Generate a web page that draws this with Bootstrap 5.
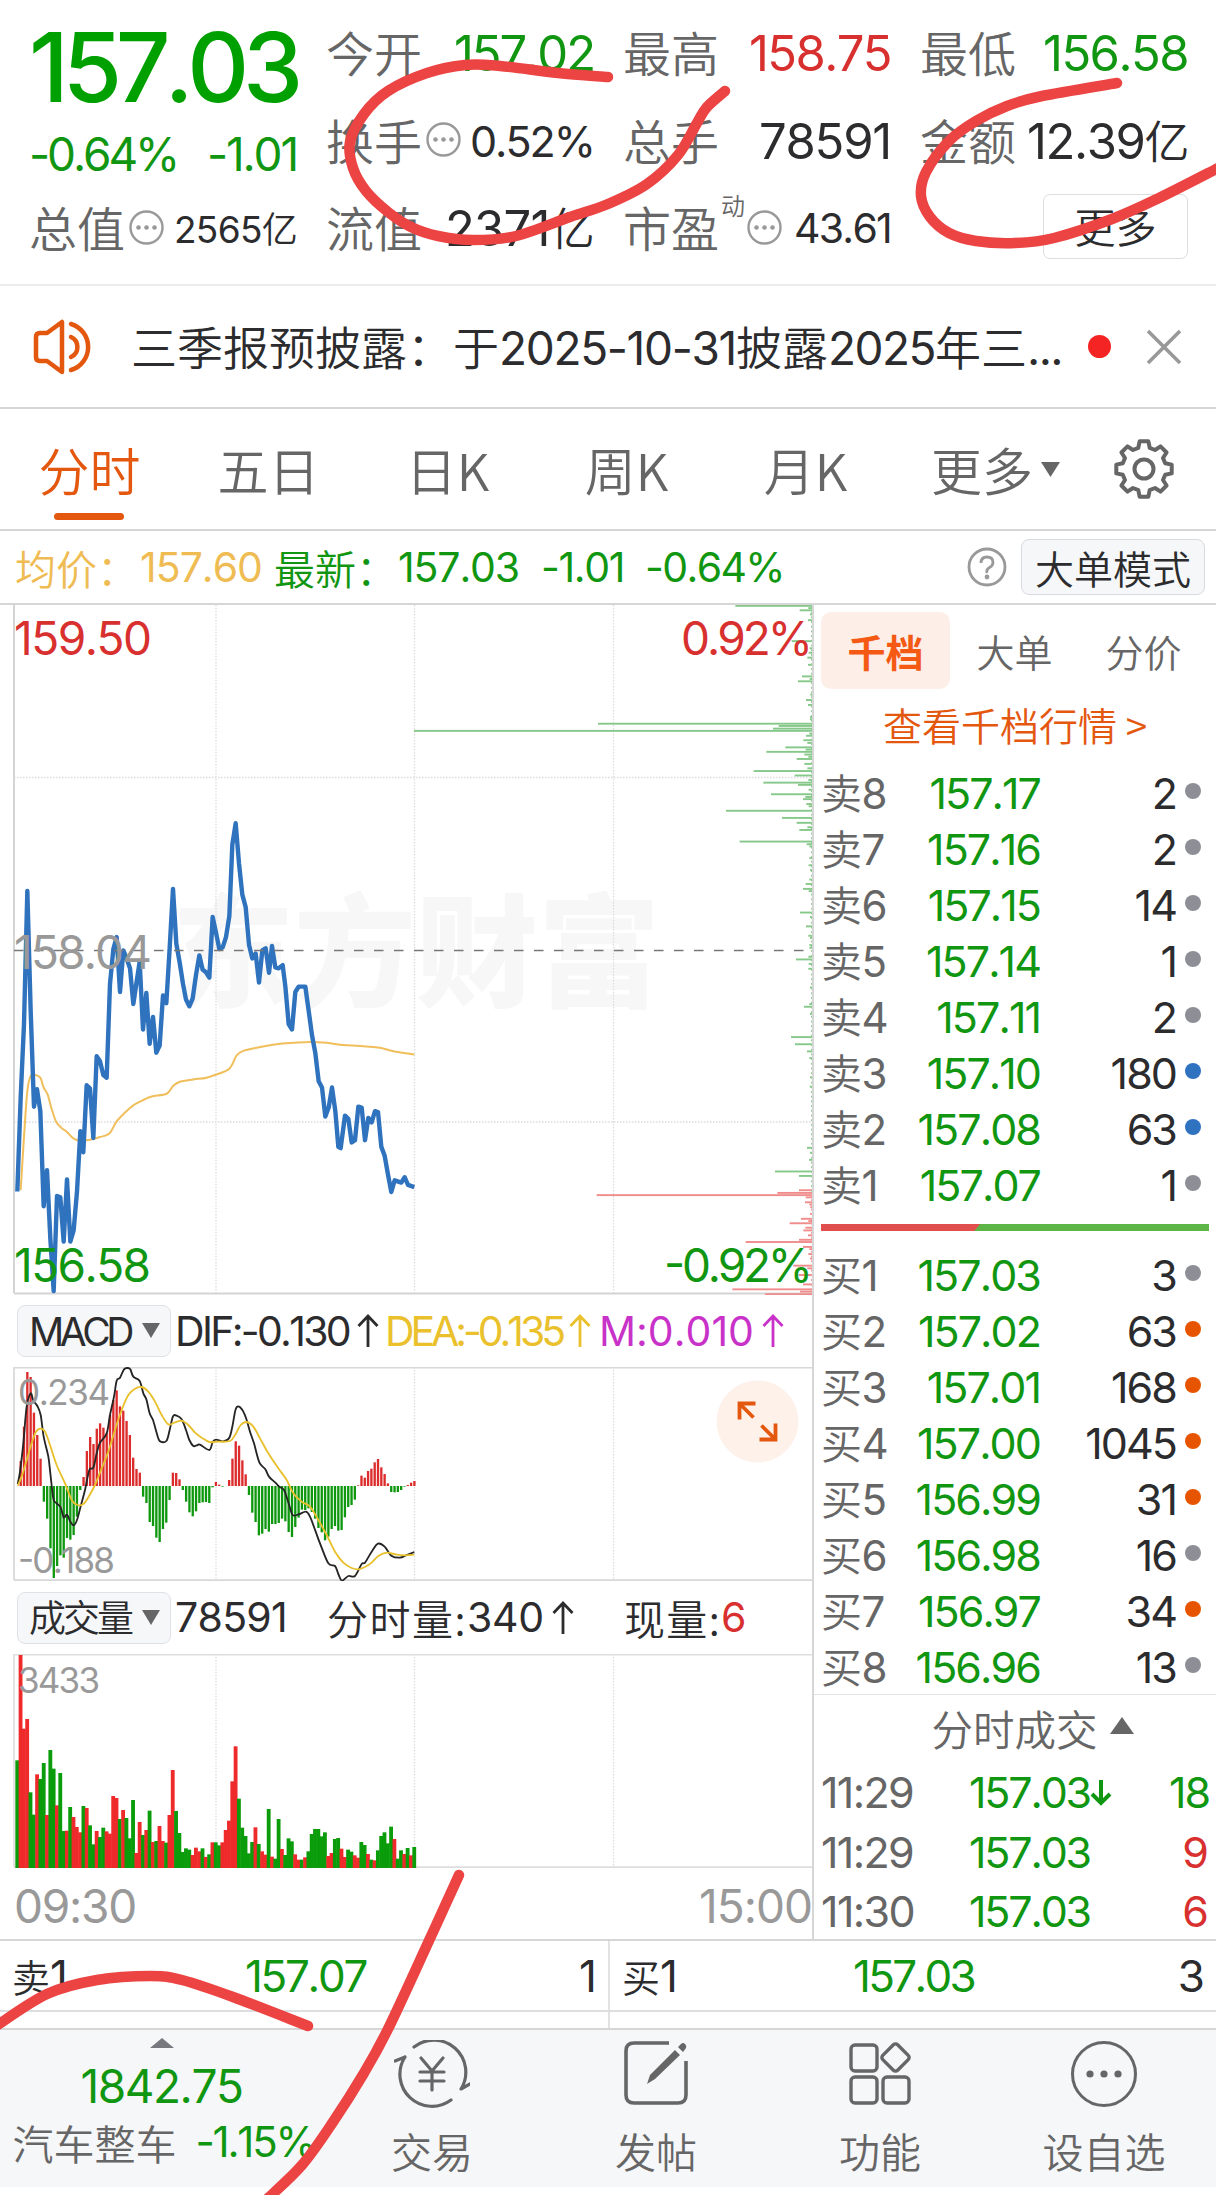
<!DOCTYPE html>
<html lang="zh-CN">
<head>
<meta charset="utf-8">
<meta name="viewport" content="width=device-width, initial-scale=1">
<title>分时行情</title>
<link rel="stylesheet" href="https://cdn.jsdelivr.net/npm/bootstrap@5.3.0/dist/css/bootstrap.min.css">
<style>
:root{--up:#d8302f;--down:#119611;--ink:#2c2c2e;--mute:#666;--soft:#999;--brand:#e4570f;--rule:#d6d6d6}
body{width:1216px;height:2195px;overflow:hidden;position:relative;background:#fff;color:var(--ink);font-family:Inter,"Noto Sans CJK SC",sans-serif;font-weight:400;line-height:1;font-kerning:none}
.t-up{color:var(--up)}.t-down{color:var(--down)}.t-mute{color:var(--mute)}.t-brand{color:var(--brand)}
.cjk{font-family:"Noto Sans CJK SC",sans-serif;font-weight:350}
body span{white-space:nowrap}
.summary{height:286px;border-bottom:2px solid #ededed;padding:0 28px 0 29px}
.summary-col{width:268px;padding-top:10px}
.summary-row{height:87.5px;font-size:49px}
.summary-row .cjk{font-size:48px}
.summary-row>.cjk.t-mute{margin-top:-5px}
.price-big{font-size:96px;font-weight:500;color:#00a000;height:106px;padding-top:9px}
.change{font-size:46px;height:69px;padding-top:7px}
.tip{width:35px;height:35px;flex:none}
.summary-row .tip{margin-top:-3px}
.summary-row>.dyn.cjk{font-size:24px;align-self:flex-start;margin:8px 0 0 2px}
.more-btn{width:145px;height:65px;border:1.5px solid #ddd;border-radius:7px}
.summary-row .more-btn{font-size:41px;margin-top:-4px;padding-bottom:3px}
.notice{height:123px;border-bottom:2px solid var(--rule);font-size:46px;padding-left:33px}
.notice-text{width:930px;margin-left:35px;white-space:nowrap;overflow:hidden;line-height:1.4}
.red-dot{width:23px;height:23px;border-radius:50%;background:#f42424;margin-left:27px}
.close-x{margin-right:34px}
.period{height:122px;border-bottom:2px solid var(--rule);font-size:51px;color:var(--mute)}
.period-item{width:179px;height:100%;position:relative}
.period-more{width:211px;padding-left:36px}
.period-item.active{color:var(--brand)}
.period-item.active::after{content:"";position:absolute;left:54px;bottom:9px;width:70px;height:7px;border-radius:4px;background:var(--brand)}
.avg{height:74px;border-bottom:2px solid var(--rule);font-size:41px;padding:0 11px 0 15px}
.big-mode{width:184px;height:56px;font-size:39px;background:#f6f7f9;border:1.5px solid #d9dade;border-radius:8px}
.main-area{height:1336px;border-bottom:2px solid var(--rule)}
.charts{width:814px;border-right:2px solid var(--rule);flex:none}
.charts svg{display:block}
.ind-row{font-size:41px;padding:0 0 0 17px}
.ind-btn{width:154px;height:52px;background:#f6f7f9;border:1.5px solid #dfe1e6;border-radius:8px;padding-left:11px;flex:none;font-size:39px}
.book{overflow:hidden;font-size:43px;padding:0 7px}
.book-tabs{height:84px;padding-top:7px}
.book-tab{width:129px;height:77px;border-radius:10px;font-size:38px;color:var(--mute)}
.book-tab.active{background:#fdeee7;color:#f45a14;font-weight:700}
.book-link{height:76px;font-size:39px;padding:0 0 6px}
.book-row{height:56px}
.book-row .lab{width:112px;color:var(--mute);font-size:41px;letter-spacing:-.01em}
.book-row .px{width:107px;color:var(--down);letter-spacing:-.045em}
.book-row .qty{width:136px;letter-spacing:-.045em}
.book-row .lab b{font-family:Inter;font-weight:400;font-size:42px}
.pip{width:16px;height:16px;border-radius:50%;background:#8e8e96;margin:-5px 0 0 9px}
.pip.o{background:#e65400}.pip.b{background:#2f72c0}
.ratio{height:7px;margin:11px 0 16px;background:#5db548}
.ratio i{display:block;width:159px;height:7px;background:#e04e4e;clip-path:polygon(0 0,100% 0,96.5% 100%,0 100%)}
.trades-head{height:69px;border-top:1.5px solid #e2e2e2;font-size:41.5px;margin:-1px -7px 0;padding-left:35px}
.trade{height:59.5px}
.quote{height:71px;border-bottom:2px solid #dcdee0;font-size:44px}
.quote-half{width:608px;padding:0 11px 0 12px}
.quote-half+.quote-half{border-left:2px solid #e2e2e2}
.quote-gap{height:16px}
.quote-gap div{width:608px}
.bottom-nav{height:159px;background:#f6f7f9;border-top:2px solid var(--rule)}
.index-cell{width:320px;padding:8px 0 0 3px}
.nav-cell{width:224px;color:var(--mute);font-size:41px;padding-top:10px}
.nav-cell svg{width:76px;height:68px;margin-bottom:22px}
.marks{position:absolute;left:0;top:0;pointer-events:none}
</style>
<script src="https://cdn.jsdelivr.net/npm/bootstrap@5.3.0/dist/js/bootstrap.bundle.min.js"></script>
</head>
<body>
<svg class="d-none">
  <symbol id="dots" viewBox="0 0 35 35"><circle cx="17.5" cy="17.5" r="16" fill="none" stroke="#999" stroke-width="2.4"/><g fill="#999"><circle cx="9.5" cy="17.5" r="2.3"/><circle cx="17.5" cy="17.5" r="2.3"/><circle cx="25.5" cy="17.5" r="2.3"/></g></symbol>
  <symbol id="up" viewBox="0 0 22 34"><path d="M11 33V2M1.5 12 11 2l9.500 10" fill="none" stroke="currentColor" stroke-width="2.8"/></symbol>
</svg>

<header class="summary d-flex justify-content-between">
  <div class="summary-col">
    <div class="price-big"><span data-w="268">157.03</span></div>
    <div class="change t-down d-flex justify-content-between align-items-center"><span data-w="148">-0.64%</span><span data-w="90">-1.01</span></div>
    <div class="summary-row d-flex align-items-center"><span class="cjk t-mute">总值</span><svg class="tip ms-1"><use href="#dots"/></svg><span class="ms-auto" style="font-size:37px" data-w="123">2565<span class="cjk" style="font-size:36px">亿</span></span></div>
  </div>
  <div class="summary-col">
    <div class="summary-row d-flex align-items-center justify-content-between"><span class="cjk t-mute">今开</span><span class="t-down" data-w="140">157.02</span></div>
    <div class="summary-row d-flex align-items-center"><span class="cjk t-mute">换手</span><svg class="tip ms-1"><use href="#dots"/></svg><span class="ms-auto" style="font-size:43px" data-w="124">0.52%</span></div>
    <div class="summary-row d-flex align-items-center justify-content-between"><span class="cjk t-mute">流值</span><span data-w="149">2371<span class="cjk" style="font-size:45px">亿</span></span></div>
  </div>
  <div class="summary-col">
    <div class="summary-row d-flex align-items-center justify-content-between"><span class="cjk t-mute">最高</span><span class="t-up" data-w="142">158.75</span></div>
    <div class="summary-row d-flex align-items-center justify-content-between"><span class="cjk t-mute">总手</span><span data-w="132">78591</span></div>
    <div class="summary-row d-flex align-items-center"><span class="cjk t-mute">市盈</span><span class="cjk t-mute dyn">动</span><svg class="tip" style="margin-left:2px"><use href="#dots"/></svg><span class="ms-auto" style="font-size:41px" data-w="97">43.61</span></div>
  </div>
  <div class="summary-col">
    <div class="summary-row d-flex align-items-center justify-content-between"><span class="cjk t-mute">最低</span><span class="t-down" data-w="145">156.58</span></div>
    <div class="summary-row d-flex align-items-center justify-content-between"><span class="cjk t-mute">金额</span><span data-w="161">12.39<span class="cjk" style="font-size:45px">亿</span></span></div>
    <div class="summary-row d-flex align-items-center justify-content-end"><span class="more-btn cjk d-flex align-items-center justify-content-center">更多</span></div>
  </div>
</header>

<section class="notice d-flex align-items-center">
  <svg width="63" height="56" viewBox="0 0 63 56" fill="none" stroke="#e4570f" stroke-width="4.500" stroke-linejoin="round" stroke-linecap="round"><path d="M29 3v50L14 42H7q-4 0-4-4V18q0-4 4-4h7z"/><path d="M38 5a24 24 0 0 1 0 46M38 18a11 11 0 0 1 0 20"/></svg>
  <div class="notice-text"><span class="cjk">三季报预披露：于</span><span data-w="237">2025-10-31</span><span class="cjk">披露</span><span data-w="107">2025</span><span class="cjk">年三</span><span data-w="35">...</span></div>
  <span class="red-dot"></span>
  <svg class="ms-auto close-x" width="36" height="36" viewBox="0 0 36 36"><path d="M2 2l32 32M34 2 2 34" stroke="#999" stroke-width="3.600"/></svg>
</section>

<nav class="period cjk d-flex align-items-center">
  <div class="period-item active d-flex align-items-center justify-content-center">分时</div>
  <div class="period-item d-flex align-items-center justify-content-center">五日</div>
  <div class="period-item d-flex align-items-center justify-content-center">日K</div>
  <div class="period-item d-flex align-items-center justify-content-center">周K</div>
  <div class="period-item d-flex align-items-center justify-content-center">月K</div>
  <div class="period-item period-more d-flex align-items-center">更多<svg class="ms-2" width="19" height="15"><path d="M0 0h19L9.500 15z" fill="#666"/></svg></div>
  <svg width="62" height="62" viewBox="-31 -31 62 62" fill="none" stroke="#666" stroke-width="4" stroke-linejoin="round" style="margin-left:7px"><path d="M27.700-4.400V4.400L21.200 5.700 19 11l3.600 5.500-6.100 6.100L11 19 5.700 21.200 4.400 27.700H-4.400L-5.700 21.200-11 19l-5.500 3.600-6.100-6.100L-19 11-21.200 5.700-27.700 4.400V-4.400L-21.200-5.700-19-11l-3.600-5.500 6.100-6.100L-11-19-5.700-21.200-4.400-27.700H4.400L5.700-21.200 11-19l5.500-3.600 6.100 6.100L19-11 21.200-5.700z"/><circle r="9.500"/></svg>
</nav>

<section class="avg d-flex align-items-center">
  <span class="cjk" style="color:#efbc54;width:125px">均价：</span><span style="color:#efbc54" data-w="122">157.60</span>
  <span class="cjk t-down" style="width:124px;margin-left:12px">最新：</span><span class="t-down" data-w="121">157.03</span><span class="t-down" style="margin-left:22px" data-w="83">-1.01</span><span class="t-down" style="margin-left:21px" data-w="139">-0.64%</span>
  <svg class="ms-auto" width="40" height="40" viewBox="0 0 40 40" fill="none" stroke="#999" stroke-width="2.800"><circle cx="20" cy="20" r="18"/><path d="M14 16q0-6 6-6t6 5.500q0 3-3.500 5T20 26"/><circle cx="20" cy="30" r="1" fill="#999"/></svg>
  <span class="big-mode cjk d-flex align-items-center justify-content-center" style="margin-left:14px">大单模式</span>
</section>

<main class="main-area d-flex">
  <div class="charts">
    <svg width="812" height="690" viewBox="0 0 812 690" id="price">
      <text x="172" y="392" font-family="Noto Sans CJK SC" font-weight="900" font-size="122" textLength="488" fill="#f7f7f7">东方财富</text>
      <g stroke="#dcdcdc" stroke-width="1.300" stroke-dasharray="1.500 1.500"><path d="M216 0V688M414.500 0V688M613.500 0V688M14 172.500H812M14 517H812"/></g>
      <path d="M14 0V688M14 688.500H812" stroke="#d4d4d4" stroke-width="2" fill="none"/>
      <g id="depth"></g>
      <g transform="translate(0,-5) scale(.33333,.44643)" fill="none" stroke-linejoin="round">
        <path id="avgline" stroke="#f0bf5c" stroke-width="2" vector-effect="non-scaling-stroke"/>
        <polyline stroke="#2f72bd" stroke-width="4.400" vector-effect="non-scaling-stroke" points="52,1325 62,1115 72,950 82,652 92,920 102,1135 111,1096 121,1145 131,1358 141,1277 151,1430 161,1548 171,1335 181,1338 191,1437 201,1298 211,1437 221,1412 231,1325 241,1190 250,1237 260,1087 270,1094 280,1205 290,1022 300,1033 310,1064 320,1070 330,860 340,782 350,755 360,878 370,785 380,803 390,825 400,905 409,860 419,810 429,962 439,880 449,994 459,934 469,1014 479,998 489,886 499,903 509,780 519,647 529,770 539,812 549,860 558,895 568,910 578,893 588,840 598,796 608,828 618,834 628,846 638,710 648,745 658,782 668,778 678,755 688,708 697,548 707,500 717,590 727,660 737,688 747,772 757,803 767,792 777,857 787,785 797,780 807,835 816,775 826,823 836,825 848,818 856,865 866,950 876,962 886,878 896,866 916,866 926,920 936,975 946,1015 956,1078 966,1092 976,1157 986,1137 996,1092 1006,1145 1015,1225 1022,1228 1035,1155 1045,1162 1055,1215 1065,1210 1075,1135 1085,1137 1095,1210 1105,1160 1115,1170 1125,1145 1134,1147 1144,1225 1154,1245 1164,1287 1174,1326 1184,1300 1204,1305 1214,1293 1224,1310 1243,1315"/>
      </g>
      <path d="M14 345.500H812" stroke="#777" stroke-width="1.600" stroke-dasharray="9.500 10.500"/>
      <g font-family="Inter" font-size="46">
        <text x="14" y="50" fill="#d8302f" textLength="138">159.50</text>
        <text x="14" y="363.500" fill="#999" textLength="138">158.04</text>
        <text x="14" y="677" fill="#119611" textLength="137">156.58</text>
        <text x="681" y="50" fill="#d8302f" textLength="132">0.92%</text>
        <text x="664" y="677" fill="#119611" textLength="149">-0.92%</text>
      </g>
    </svg>
    <div class="ind-row d-flex align-items-center" style="height:72px">
      <div class="ind-btn d-flex align-items-center"><span data-w="101">MACD</span><svg style="margin-left:11px" width="20" height="16"><path d="M1 0h18l-9 15z" fill="#666"/></svg></div>
      <span style="margin-left:4px" data-w="174">DIF:-0.130</span><svg style="margin-left:8px" width="22" height="34"><use href="#up"/></svg>
      <span style="margin-left:6px;color:#eac12d" data-w="177">DEA:-0.135</span><svg style="margin-left:7px;color:#eac12d" width="22" height="34"><use href="#up"/></svg>
      <span style="margin-left:8px;color:#c832c8" data-w="155">M:0.010</span><svg style="margin-left:8px;color:#c832c8" width="22" height="34"><use href="#up"/></svg>
    </div>
    <svg width="812" height="214" viewBox="0 0 812 214">
      <path d="M216 0V213M414.500 0V213M613.500 0V213" stroke="#dcdcdc" stroke-width="1.300" stroke-dasharray="1.500 1.500"/>
      <path d="M14 213V.7H812M14 213.200H812" stroke="#d8d8d8" stroke-width="1.700" fill="none"/>
      <g transform="translate(0,-77) scale(.33333)"><g id="macd"></g>
        <g fill="none" stroke-width="5.500"><path id="dif" stroke="#252525"/><path id="dea" stroke="#e8c02c"/></g></g>
      <g font-family="Inter" font-size="35" fill="#999"><text x="18" y="38" textLength="92">0.234</text><text x="18" y="206" textLength="97">-0.188</text></g>
      <circle cx="757.500" cy="54.500" r="41" fill="#fef1ea"/>
      <g transform="translate(757.500,54.500)" fill="none" stroke="#e4570f" stroke-width="3.800"><path d="M-2-18H-18V-2M-18-18-4-4M2 18H18V2M18 18 4 4"/></g>
    </svg>
    <div class="ind-row d-flex align-items-center" style="height:73px">
      <div class="ind-btn d-flex align-items-center"><span class="cjk" style="font-size:37px;padding-bottom:3px" data-w="102">成交量</span><svg style="margin-left:10px" width="20" height="16"><path d="M1 0h18l-9 15z" fill="#666"/></svg></div>
      <span style="margin-left:4px" data-w="112">78591</span>
      <span class="cjk" style="margin-left:40px" data-w="140">分时量:</span><span data-w="77">340</span><svg style="margin-left:8px" width="22" height="34"><use href="#up"/></svg>
      <span class="cjk" style="margin-left:50px" data-w="97">现量:</span><span class="t-up">6</span>
    </div>
    <svg width="812" height="214" viewBox="0 0 812 214">
      <path d="M216 0V213M414.500 0V213M613.500 0V213" stroke="#dcdcdc" stroke-width="1.300" stroke-dasharray="1.500 1.500"/>
      <path d="M14 213V.7H812M14 213.200H812" stroke="#dedede" stroke-width="1.700" fill="none"/>
      <g id="vol" transform="translate(0,-64) scale(.33333)"></g>
      <text x="18" y="38.500" font-family="Inter" font-size="35" fill="#999" textLength="82">3433</text>
    </svg>
    <div class="d-flex justify-content-between align-items-center" style="height:74px;font-size:46px;color:#999;padding:1px 0 0 14px"><span data-w="122">09:30</span><span data-w="113">15:00</span></div>
  </div>

  <aside class="book flex-grow-1">
    <div class="book-tabs cjk d-flex">
      <div class="book-tab active d-flex align-items-center justify-content-center">千档</div>
      <div class="book-tab d-flex align-items-center justify-content-center">大单</div>
      <div class="book-tab d-flex align-items-center justify-content-center">分价</div>
    </div>
    <div class="book-link cjk t-brand d-flex align-items-center justify-content-center">查看千档行情&nbsp;&gt;</div>
    <div id="asks"></div>
    <div class="ratio"><i></i></div>
    <div id="bids"></div>
    <div class="trades-head cjk t-mute d-flex align-items-center justify-content-center">分时成交<svg style="margin:-7px 0 0 12px" width="24" height="17"><path d="M0 17h24L12 0z" fill="#666"/></svg></div>
    <div class="trade d-flex align-items-center"><span class="t-mute" data-w="92">11:29</span><span class="t-down" style="margin-left:56px" data-w="121">157.03</span><svg width="22" height="29" viewBox="0 0 22 29"><path d="M11 2v24M2 16l9 9 9-9" fill="none" stroke="#119611" stroke-width="4"/></svg><span class="t-down ms-auto" data-w="40">18</span></div>
    <div class="trade d-flex align-items-center"><span class="t-mute" data-w="92">11:29</span><span class="t-down" style="margin-left:56px" data-w="121">157.03</span><span class="t-up ms-auto">9</span></div>
    <div class="trade d-flex align-items-center"><span class="t-mute" data-w="93">11:30</span><span class="t-down" style="margin-left:55px" data-w="121">157.03</span><span class="t-up ms-auto">6</span></div>
  </aside>
</main>

<section class="quote d-flex">
  <div class="quote-half d-flex align-items-center"><span class="cjk" style="font-size:38px">卖</span><span data-w="22">1</span><span class="t-down" style="margin-left:173px" data-w="121">157.07</span><span class="ms-auto">1</span></div>
  <div class="quote-half d-flex align-items-center"><span class="cjk" style="font-size:38px">买</span><span data-w="22">1</span><span class="t-down" style="margin-left:171px" data-w="121">157.03</span><span class="ms-auto">3</span></div>
</section>
<div class="quote-gap d-flex"><div></div><div style="border-left:2px solid #e2e2e2"></div></div>

<footer class="bottom-nav d-flex">
  <div class="index-cell d-flex flex-column align-items-center">
    <svg width="24" height="10"><path d="M0 10h24L12 0z" fill="#77787d"/></svg>
    <span class="t-down" style="font-size:46px;margin-top:15px" data-w="162">1842.75</span>
    <div class="d-flex align-items-center" style="margin:12px 0 0 4px"><span class="cjk t-mute" style="font-size:41px">汽车整车</span><span class="t-down" style="font-size:42px;margin-left:19px" data-w="119">-1.15%</span></div>
  </div>
  <div class="nav-cell cjk d-flex flex-column align-items-center">
    <svg viewBox="0 0 76 68" fill="none" stroke="#666" stroke-width="3.200" stroke-linecap="round" stroke-linejoin="round"><path d="M20 7A32 32 0 0 1 67 49l9-5M1 21l10-4M11 17A32 32 0 0 0 57 60"/><path d="M27 18l11 13 11-13M38 31v19M26 32h24M26 41h24"/></svg><span>交易</span></div>
  <div class="nav-cell cjk d-flex flex-column align-items-center">
    <svg viewBox="0 0 76 68" fill="none" stroke="#666" stroke-width="3.600"><path d="M51 3H16q-8 0-8 8V55q0 8 8 8H60q8 0 8-8V21" /><path d="M29 44l3-9L57 10l5 5L37 39zM60 7l3-3q2-2 4 0t1 4l-3 4z" fill="#666" stroke="none"/></svg><span>发帖</span></div>
  <div class="nav-cell cjk d-flex flex-column align-items-center">
    <svg viewBox="0 0 76 68" fill="none" stroke="#666" stroke-width="3.400" stroke-linejoin="round"><rect x="9" y="5" width="26" height="26" rx="4"/><rect x="9" y="37" width="26" height="26" rx="4"/><rect x="41" y="37" width="26" height="26" rx="4"/><rect x="43" y="7" width="21" height="21" rx="3" transform="rotate(45 53.500 17.500)"/></svg><span>功能</span></div>
  <div class="nav-cell cjk d-flex flex-column align-items-center">
    <svg viewBox="0 0 76 68"><circle cx="38" cy="34" r="31.500" fill="none" stroke="#666" stroke-width="3"/><g fill="#666"><circle cx="24" cy="34" r="3.600"/><circle cx="38" cy="34" r="3.600"/><circle cx="52" cy="34" r="3.600"/></g></svg><span>设自选</span></div>
</footer>

<svg class="marks" width="1216" height="2195" fill="none" stroke="#ec4343" stroke-width="10.500" stroke-linecap="round" id="marks"></svg>

<script>
// Tighten or loosen tracking so each figure fills its allotted width.
document.querySelectorAll('[data-w]').forEach(function(el){
  var n=el.textContent.length, w=el.getBoundingClientRect().width;
  el.style.letterSpacing=((+el.dataset.w-w)/n)+'px';
});

// Smooth curve through a flat list of x,y pairs.
function curve(a){
  var p=[];for(var i=0;i<a.length;i+=2)p.push([a[i],a[i+1]]);
  var d='M'+p[0];
  for(i=0;i<p.length-1;i++){
    var p0=p[i-1]||p[i],p1=p[i],p2=p[i+1],p3=p[i+2]||p2;
    d+='C'+[p1[0]+(p2[0]-p0[0])/6,p1[1]+(p2[1]-p0[1])/6,p2[0]-(p3[0]-p1[0])/6,p2[1]-(p3[1]-p1[1])/6,p2[0],p2[1]].map(function(v){return v.toFixed(1)});
  }
  return d;
}
function $(id){return document.getElementById(id)}

// Order book
function rows(id,name,list){
  $(id).innerHTML=list.map(function(r){
    return '<div class="book-row d-flex align-items-center"><span class="lab cjk">'+name+'<b>'+r[0]+'</b></span><span class="px text-end d-flex justify-content-end">'+r[1]+'</span><span class="qty text-end">'+r[2]+'</span><span class="pip '+(r[3]||'')+'"></span></div>';
  }).join('');
}
rows('asks','卖',[[8,'157.17',2],[7,'157.16',2],[6,'157.15',14],[5,'157.14',1],[4,'157.11',2],[3,'157.10',180,'b'],[2,'157.08',63,'b'],[1,'157.07',1]]);
rows('bids','买',[[1,'157.03',3],[2,'157.02',63,'o'],[3,'157.01',168,'o'],[4,'157.00',1045,'o'],[5,'156.99',31,'o'],[6,'156.98',16],[7,'156.97',34,'o'],[8,'156.96',13]]);

// Average price
$('avgline').setAttribute('d',curve([62,1322,68,1250,74,1180,82,1100,92,1066,105,1064,121,1070,131,1092,143,1108,155,1140,168,1168,185,1183,200,1191,220,1206,240,1211,270,1209,300,1203,328,1195,350,1168,375,1148,400,1132,430,1120,455,1112,500,1106,520,1088,540,1079,580,1074,620,1070,660,1060,685,1052,697,1040,710,1020,730,1010,770,1003,830,995,880,992,930,990,980,992,1030,997,1080,999,1140,1003,1180,1011,1243,1018]));

// Depth of resting orders: [y, left edge]
var green=[[13,1006],[23,1199],[18,1225],[45,1224],[32,1230],[92,1175],[108,1229],[118,1226],[129,1222],[145,1224],[171,1206],[177,1229],[182,1194],[212,1231],[224,1218],[235,1224],[262,1230],[267,1230],[277,594],[282,1136],[288,1119],[293,42],[299,1228],[304,1218],[314,1210],[320,1222],[330,1156],[335,1217],[340,1099],[346,1213],[351,1225],[356,1190],[367,1213],[377,1222],[383,1061],[393,1184],[403,1225],[409,1090],[414,1194],[425,1226],[435,1113],[441,1216],[446,1209],[457,1219],[462,1226],[472,978],[488,1146],[499,1190],[509,1222],[515,1198],[541,1019],[547,1220],[552,1228],[578,1228],[594,1226],[605,1230],[626,1228],[636,1217],[647,1209],[652,1226],[700,1200],[710,1230],[731,1218],[752,1225],[757,1230],[773,1228],[779,1228],[799,1225],[805,1188],[815,1226],[826,1225],[868,1230],[905,1228],[911,1212],[927,1230],[979,1173],[995,1185],[1011,1221],[1026,1228],[1069,1230],[1090,1229],[1227,1221],[1238,1230],[1254,1227],[1280,1125],[1290,1197]];
var red=[[1322,1197],[1328,1132],[1333,590],[1338,1217],[1349,1215],[1354,1228],[1360,1231],[1375,1230],[1386,1203],[1391,1225],[1396,1169],[1406,1216],[1412,1210],[1423,1224],[1433,1197],[1438,1037],[1449,1209],[1454,1228],[1465,1225],[1475,1230],[1491,1180],[1497,1222],[1512,1196],[1533,1209],[1544,997],[1549,1200],[1555,1095]];
var s='';
function depth(list,c){list.forEach(function(b){var x=400+b[1]/3;s+='<rect x="'+x+'" y="'+(b[0]/2.24-5.900)+'" width="'+(812-x)+'" height="1.900" fill="'+c+'"/>'})}
depth(green,'#86c88a');depth(red,'#f08c8c');
for(var y=2;y<688;y+=4.700)s+='<rect x="811" y="'+y+'" width="1.500" height="1.800" fill="'+(y<585?'#8ecb90':'#f09a9a')+'"/>';
$('depth').innerHTML=s;

// MACD histogram, zero line at 588
var m=[588,513,410,246,261,368,435,506,635,686,775,864,828,796,803,744,749,735,680,600,561,483,441,462,416,400,413,430,375,330,301,349,362,393,435,503,537,548,620,639,696,708,743,756,717,698,630,548,549,568,600,635,667,679,664,639,637,636,639,592,576,584,590,588,570,506,454,467,511,553,615,668,696,736,731,717,725,702,702,699,686,694,726,741,711,683,659,660,655,666,686,714,727,751,740,717,708,722,720,682,651,645,629,586,557,563,543,536,517,507,532,552,580,606,607,606,600,590,585,578,573];
$('macd').innerHTML=m.map(function(v,i){return '<rect x="'+(48.700+i*9.925)+'" y="'+Math.min(v,588)+'" width="7" height="'+Math.abs(v-588)+'" fill="'+(v<588?'#dc2c2c':'#0f980f')+'"/>'}).join('');
$('dif').setAttribute('d',curve([53,582,60,545,70,460,80,350,92,310,100,332,112,348,122,375,131,440,145,500,151,550,160,625,170,640,182,652,191,682,201,674,211,695,221,706,231,690,243,645,255,600,268,540,280,533,290,490,300,458,320,430,330,375,342,320,350,272,360,263,372,238,383,234,391,238,400,260,419,273,430,310,439,328,449,370,459,390,469,425,479,453,499,453,509,420,519,379,530,377,545,388,558,420,568,450,580,468,590,466,600,464,628,480,638,456,648,449,670,454,688,443,697,410,707,358,717,350,730,365,740,390,750,425,762,460,778,517,796,538,807,560,826,578,838,590,852,600,866,640,878,675,896,673,918,665,930,680,946,722,960,760,985,820,1005,828,1015,852,1026,872,1045,858,1065,858,1085,822,1095,818,1115,785,1134,761,1154,770,1174,797,1200,803,1220,795,1243,786]));
$('dea').setAttribute('d',curve([53,587,65,560,80,510,95,460,108,425,122,416,135,425,150,465,170,525,195,580,215,630,232,645,250,642,265,622,285,585,305,535,325,485,345,420,365,360,385,315,405,296,425,291,445,305,465,335,485,375,505,403,525,397,545,392,565,405,585,428,605,443,628,456,650,455,690,453,707,432,722,405,740,396,760,410,780,445,805,490,835,535,860,570,880,610,905,635,930,650,955,690,980,735,1005,785,1030,818,1055,834,1075,838,1095,831,1115,818,1135,798,1160,788,1190,794,1215,796,1243,794]));

// Volume, r = rising minute, g = falling minute
var v='g511 r195 r416 r387 g607 g674 r553 g567 g519 r675 g480 g536 r646 g549 g723 r722 g651 r681 r711 r727 g648 r654 g706 g763 r723 g741 g713 r724 r731 r618 r624 g687 r660 g684 g745 g630 r789 r696 g735 r720 g662 r756 g753 r708 r753 g758 r675 r540 g663 g729 g786 g775 g779 r795 r773 r784 g775 r801 g793 r757 g757 g766 r757 r720 r692 r574 r469 g626 g713 g738 g790 g756 r712 g762 r784 r794 g657 r800 g806 g687 r777 g795 g745 g754 r793 r809 g809 r802 g784 g732 g717 g717 g739 g727 r798 r789 g747 g744 r776 r801 g779 g785 r796 r803 g756 g765 r792 g809 r811 g781 g738 g727 g760 g710 r747 g806 g781 r792 g774 r796 g771'.split(' ');
$('vol').innerHTML=v.map(function(b,i){var t=+b.slice(1);return '<rect x="'+(46+i*9.925)+'" y="'+t+'" width="11.500" height="'+(834-t)+'" fill="'+(b[0]=='g'?'#0a9c0a':'#ee2a2a')+'"/>'}).join('');

// Hand-drawn highlights
[[608,77,558,73,500,66,465,65,427,73,388,91,364,114,350,142,353,168,366,191,388,212,411,227,438,236,473,240,516,236,570,217,608,204,647,184,678,155,697,123,707,107,725,91],
 [1117,83,1042,96,1007,106,976,121,949,141,926,172,921,196,930,217,949,233,976,241,1015,243,1054,238,1112,219,1159,198,1222,166],
 [-4,2026,47,1994,97,1980,151,1976,182,1980,233,1997,308,2026],
 [459,1875,427,1945,388,2029,364,2073,333,2122,302,2165,266,2200]
].forEach(function(a){$('marks').innerHTML+='<path d="'+curve(a)+'"/>'});
</script>
</body>
</html>
